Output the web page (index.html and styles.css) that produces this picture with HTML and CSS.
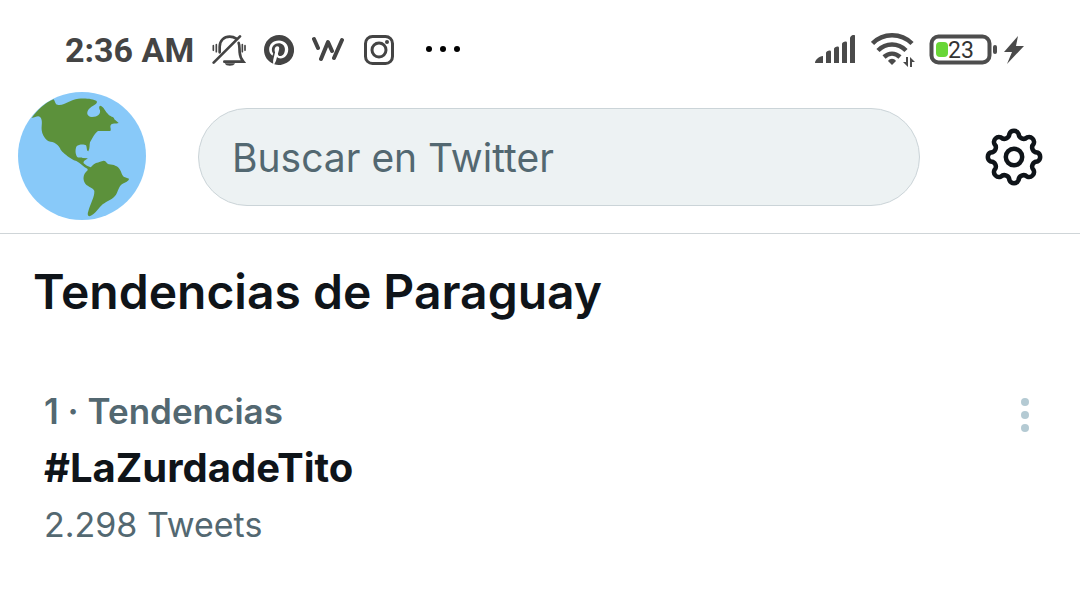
FILE: index.html
```html
<!DOCTYPE html>
<html lang="es">
<head>
<meta charset="utf-8">
<meta name="viewport" content="width=device-width, initial-scale=1">
<title>Tendencias</title>
<link rel="stylesheet" href="styles.css">
</head>
<body>
<div class="status">
  <div class="status-left">
    <span class="time">2:36 AM</span>
    <svg width="34" height="34" viewBox="0 0 102 102" fill="none" stroke="#444" stroke-width="8" stroke-linecap="round" aria-hidden="true">
      <path d="M23 58V41C23 23 36 11 53 11c8 0 14 2 20 6M80 30c3 7 2 14 3 28 1 13 4 20 11 28H37"/>
      <path d="M5 89L84 10"/>
      <path d="M4 38v14M13 35v21M91 35v21M99 38v14" stroke-width="5"/>
      <path d="M38 91h31c-3 10-28 10-31 0z" fill="#444" stroke="none"/>
    </svg>
    <svg width="30" height="30" viewBox="0 0 24 24" fill="#444" aria-hidden="true">
      <path d="M12 0C5.373 0 0 5.373 0 12c0 4.99 3.05 9.26 7.4 11.07-.1-.94-.2-2.38.04-3.4l1.41-5.96s-.36-.72-.36-1.78c0-1.67.97-2.91 2.17-2.91 1.02 0 1.52.77 1.52 1.69 0 1.03-.66 2.57-1 4-.28 1.2.6 2.17 1.78 2.17 2.13 0 3.77-2.25 3.77-5.5 0-2.87-2.06-4.88-5.01-4.88-3.41 0-5.42 2.56-5.42 5.2 0 1.03.4 2.14.9 2.74.1.12.11.22.08.35l-.33 1.35c-.05.22-.17.26-.4.16-1.5-.7-2.43-2.88-2.43-4.63 0-3.78 2.74-7.24 7.9-7.24 4.15 0 7.37 2.95 7.37 6.9 0 4.12-2.6 7.43-6.2 7.43-1.21 0-2.35-.63-2.74-1.37l-.75 2.84c-.27 1.04-1 2.35-1.49 3.14A12 12 0 1 0 12 0z"/>
    </svg>
    <svg width="34" height="30" viewBox="0 0 34 30" fill="none" stroke="#444" stroke-width="4" stroke-linecap="round" stroke-linejoin="round" aria-hidden="true">
      <path d="M2 4l4 9M9 24l7-17 4 9M22 23l8-18"/>
    </svg>
    <svg width="30" height="30" viewBox="0 0 30 30" fill="none" stroke="#444" stroke-width="3" aria-hidden="true">
      <rect x="1.5" y="1.5" width="27" height="27" rx="7"/>
      <circle cx="15" cy="15" r="7"/>
      <circle cx="23" cy="7" r="2" fill="#444" stroke="none"/>
    </svg>
    <svg class="icon-more" width="36" height="8" viewBox="0 0 36 8" aria-hidden="true">
      <circle cx="4" cy="3" r="3"/><circle cx="18" cy="3" r="3"/><circle cx="32" cy="3" r="3"/>
    </svg>
  </div>
  <div class="status-right">
    <svg width="42" height="30" viewBox="0 0 42 30" fill="#4a4a4a" aria-hidden="true">
      <path d="M0 28c0-3 4-7 8-7v7zM11 28V18c0-2 5-4 5-1v11zM19 28V14c0-2 5-4 5-1v15zM27 28V9c0-2 5-4 5-1v20zM35 28V3c0-2 5-5 5-2v27z"/>
    </svg>
    <svg width="44" height="34" viewBox="0 0 44 34" fill="none" stroke="#4a4a4a" stroke-width="4.500" aria-hidden="true">
      <path d="M1.500 10.500C12-.500 30-.500 41 10.500M7 17.500c8-8 20-8 28 0M13 24c5-4.500 11-4.500 16 0"/>
      <path d="M17 28c2-3 6-3 8 0l-4 4z" fill="#4a4a4a" stroke="none"/>
      <path d="M35 24h2v10l-5-5h3zM39 34h2v-5h3l-5-5z" fill="#4a4a4a" stroke="none"/>
    </svg>
    <svg width="70" height="32" viewBox="0 0 70 32" role="img" aria-label="23%">
      <rect x="2.500" y="2.500" width="58" height="26" rx="7" fill="#fff" stroke="#4d4d4d" stroke-width="4"/>
      <rect x="7" y="8" width="12" height="15" rx="4" fill="#69d636"/>
      <rect x="64" y="11" width="4" height="9" rx="2" fill="#4d4d4d"/>
      <text class="battery-text" x="19" y="24">23</text>
    </svg>
    <svg class="icon-bolt" width="20" height="30" viewBox="0 0 20 30" fill="#4a4a4a" aria-hidden="true">
      <path d="M14 1L0 17h8L3 29l17-18h-8z"/>
    </svg>
  </div>
</div>

<header class="topbar">
  <button class="avatar" aria-label="Perfil">
    <svg width="128" height="128" viewBox="24 21 384 384" aria-hidden="true">
      <circle cx="216" cy="213" r="192" fill="#88c9f9"/>
      <path fill="#5c913b" d="M65 99C82 75 104 54 131 43C138 55 136 61 148 60C168 58 182 44 205 41C225 39 250 41 260 48C264 58 250 60 241 68C228 78 228 94 246 96C264 96 272 88 270 76C267 70 266 63 271 62C281 65 284 76 292 85C300 97 312 94 313 103L326 114C318 118 305 112 302 121C299 128 305 132 301 138L265 138C256 141 247 160 240 172C238 180 240 190 235 199C229 198 232 190 228 181C222 177 205 178 200 184C195 192 196 208 201 215C207 221 212 215 218 219L234 220C227 225 219 228 221 235C227 241 234 244 242 247C247 243 250 237 258 234C267 231 274 229 281 227C289 227 289 236 297 238C311 239 323 243 329 253C335 261 334 269 341 275L357 281C356 289 346 291 338 296C325 304 325 318 318 329C309 343 291 347 278 358C266 368 256 388 239 394C230 392 234 382 236 375C242 355 254 335 253 318C251 308 234 306 226 296C217 283 220 268 230 259C233 256 234 254 232 251C222 247 210 234 199 228C188 226 184 220 177 217C166 208 153 199 150 190C147 182 141 178 133 173C125 169 118 172 111 166C103 158 96 147 95 135C94 120 99 107 91 97C84 90 77 97 65 99z"/>
    </svg>
  </button>
  <input class="search" type="search" placeholder="Buscar en Twitter" aria-label="Buscar en Twitter">
  <button class="settings" aria-label="Configuración">
    <svg width="58" height="58" viewBox="-29 -29 58 58" fill="none" stroke="#0f1419" stroke-width="4.500" aria-hidden="true">
      <path d="M-4.600-23.150A5 5 0 0 1 4.600-23.150A5 5 0 0 0 13.110-19.620A5 5 0 0 1 19.620-13.110A5 5 0 0 0 23.150-4.600A5 5 0 0 1 23.150 4.600A5 5 0 0 0 19.620 13.110A5 5 0 0 1 13.110 19.620A5 5 0 0 0 4.600 23.150A5 5 0 0 1-4.600 23.150A5 5 0 0 0-13.110 19.620A5 5 0 0 1-19.620 13.110A5 5 0 0 0-23.150 4.600A5 5 0 0 1-23.150-4.600A5 5 0 0 0-19.620-13.110A5 5 0 0 1-13.110-19.620A5 5 0 0 0-4.600-23.150z"/>
      <circle r="8.200"/>
    </svg>
  </button>
</header>

<main>
  <h1 class="heading">Tendencias de Paraguay</h1>
  <article class="trend">
    <div class="trend-body">
      <p class="trend-rank">1 · Tendencias</p>
      <h2 class="trend-name">#LaZurdadeTito</h2>
      <p class="trend-count">2.298 Tweets</p>
    </div>
    <button class="trend-menu" aria-label="Más opciones">
      <svg width="10" height="36" viewBox="0 0 10 36" fill="#b4cad3" aria-hidden="true">
        <circle cx="5" cy="5" r="4"/><circle cx="5" cy="18" r="4"/><circle cx="5" cy="31" r="4"/>
      </svg>
    </button>
  </article>
</main>
</body>
</html>
```
FILE: styles.css
```css
* { box-sizing: border-box; }

body {
  margin: 0;
  background: #fff;
  color: #0f1419;
  font-family: Inter, "Liberation Sans", sans-serif;
}

svg { display: block; flex: none; }

button {
  padding: 0;
  border: 0;
  background: none;
}

.status {
  display: flex;
  justify-content: space-between;
  align-items: center;
  padding: 28px 56px 14px 65px;
}

.status-left,
.status-right {
  display: flex;
  align-items: center;
}

.status-left { gap: 18px; }
.status-right { gap: 14px; }

.time {
  color: #444;
  font: 700 34px/44px Roboto, sans-serif;
}

.icon-more { margin-left: 13px; }
.icon-bolt { margin-left: -9px; }

.battery-text {
  fill: #333;
  font: 400 23px Roboto, sans-serif;
}

.topbar {
  display: flex;
  align-items: center;
  padding: 6px 37px 13px 18px;
  border-bottom: 1px solid #cfd5d8;
}

.search {
  flex: 1;
  min-width: 0;
  height: 98px;
  margin: 2px 65px 0 52px;
  padding: 0 33px;
  border: 1px solid #cbd4d8;
  border-radius: 49px;
  background: #edf2f3;
  color: #0f1419;
  font: 400 39px/48px Inter, sans-serif;
  appearance: none;
}

.search::placeholder {
  color: #536871;
  opacity: 1;
}

.settings { margin-top: 2px; }

.heading {
  margin: 0;
  padding: 28px 33px 0;
  font-size: 48px;
  font-weight: 600;
  line-height: 60px;
}

.trend {
  display: flex;
  justify-content: space-between;
  align-items: flex-start;
  padding: 65px 50px 40px 44px;
}

.trend-rank,
.trend-name,
.trend-count {
  margin: 0;
  line-height: 48px;
}

.trend-body {
  display: grid;
  gap: 9px;
}

.trend-rank {
  color: #536871;
  font-size: 35px;
  font-weight: 600;
}

.trend-name {
  font-size: 40px;
  font-weight: 700;
}

.trend-count {
  color: #536871;
  font-size: 34px;
}

.trend-menu { padding-top: 10px; }
```
